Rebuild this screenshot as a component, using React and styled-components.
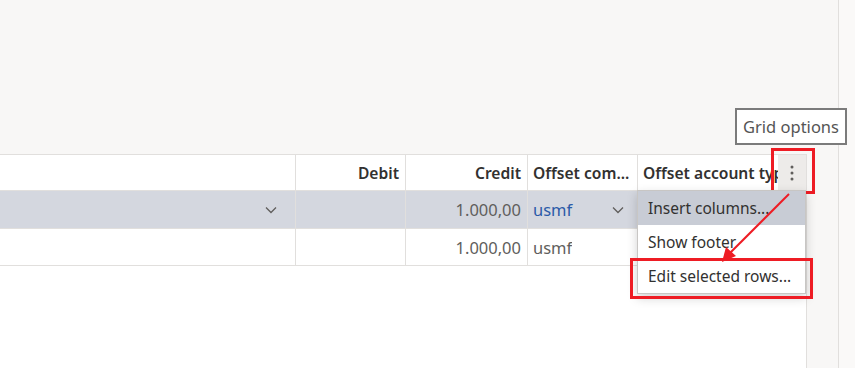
import styled, { createGlobalStyle } from 'styled-components';

const GlobalStyle = createGlobalStyle`
  * { box-sizing: border-box; }
  html, body { margin: 0; padding: 0; }
  body {
    font-family: "Segoe UI", "Noto Sans", sans-serif;
    background: #faf9f8;
  }
`;

const COLUMNS = '296px 110px 122px 110px 1fr';
const RED = '#ee1c24';

const Page = styled.div`
  position: relative;
  width: 855px;
  height: 368px;
  overflow: hidden;
  display: flex;
`;

const Workspace = styled.div`
  width: 839px;
  background: #f8f7f6;
  border-right: 1px solid #e1dfdd;
  padding-top: 154px;
  display: flex;
  flex-direction: column;
`;

const Sheet = styled.div`
  width: 807px;
  flex: 1;
  background: #ffffff;
  border-right: 1px solid #e1dfdd;
`;

const Row = styled.div`
  display: grid;
  grid-template-columns: ${COLUMNS};
  height: ${(p) => p.$height}px;
  background: ${(p) => (p.$selected ? '#d4d7df' : '#ffffff')};
  border-top: ${(p) => (p.$header ? '1px solid #e1dfdd' : 'none')};
  border-bottom: 1px solid #e1dfdd;
  font-size: ${(p) => (p.$header ? 15.6 : 16.5)}px;
  color: ${(p) => (p.$header ? '#323130' : '#605e5c')};
  font-weight: ${(p) => (p.$header ? 600 : 400)};
`;

const Cell = styled.div`
  position: relative;
  display: flex;
  align-items: center;
  justify-content: ${(p) => (p.$align === 'right' ? 'flex-end' : 'flex-start')};
  padding: 0 ${(p) => (p.$align === 'right' ? '6px' : '4px')} 0 5px;
  border-right: ${(p) => (p.$last ? 'none' : '1px solid #e1dfdd')};
  white-space: nowrap;
  min-width: 0;
`;

const Value = styled.span`
  color: ${(p) => (p.$link ? '#2b5aa8' : 'inherit')};
  flex: ${(p) => (p.$grow ? 1 : 'none')};
  overflow: hidden;
`;

const Clip = styled.span`
  flex: 1;
  overflow: hidden;
`;

const Chevron = styled.svg`
  width: 12px;
  height: 8px;
  margin-right: ${(p) => p.$gap || 12}px;
  flex: none;
`;

const OptionsButton = styled.div`
  position: relative;
  width: 28px;
  height: 100%;
  margin-right: -4px;
  background: #edebe9;
  display: flex;
  align-items: center;
  justify-content: center;
  flex: none;
`;

const Tooltip = styled.div`
  position: absolute;
  right: -41px;
  bottom: calc(100% + 10px);
  width: 112px;
  height: 37px;
  background: #ffffff;
  border: 2px solid #7b7b7b;
  color: #555555;
  font-weight: 400;
  font-size: 16.5px;
  display: flex;
  align-items: center;
  justify-content: center;
`;

const Highlight = styled.div`
  position: absolute;
  top: ${(p) => p.$t}px;
  right: ${(p) => p.$r}px;
  bottom: ${(p) => p.$b}px;
  left: ${(p) => p.$l}px;
  border: 3px solid ${RED};
  pointer-events: none;
`;

const Menu = styled.div`
  position: absolute;
  top: 100%;
  left: -1px;
  right: 0;
  background: #ffffff;
  border: 1px solid #c8c6c4;
  box-shadow: 0 4px 10px rgba(0, 0, 0, 0.18);
  font-size: 15.5px;
  font-weight: 400;
  color: #323130;
  z-index: 2;
`;

const MenuItem = styled.div`
  position: relative;
  height: 34px;
  padding-left: 10px;
  display: flex;
  align-items: center;
  background: ${(p) => (p.$active ? '#c8ccd5' : '#ffffff')};
`;

const Overlay = styled.svg`
  position: absolute;
  left: 0;
  top: 0;
  pointer-events: none;
  z-index: 3;
`;

const DownChevron = ({ gap }) => (
  <Chevron $gap={gap} viewBox="0 0 12 8">
    <path d="M1 1.5 L6 6.5 L11 1.5" fill="none" stroke="#605e5c" strokeWidth="1.3" />
  </Chevron>
);

const MoreIcon = () => (
  <svg width="4" height="16" viewBox="0 0 4 16">
    <circle cx="2" cy="2" r="1.5" fill="#605e5c" />
    <circle cx="2" cy="8" r="1.5" fill="#605e5c" />
    <circle cx="2" cy="14" r="1.5" fill="#605e5c" />
  </svg>
);

const App = () => (
  <>
    <GlobalStyle />
    <Page>
      <Workspace>
        <Sheet>
          <Row $header $height={37}>
            <Cell />
            <Cell $align="right">Debit</Cell>
            <Cell $align="right">Credit</Cell>
            <Cell>Offset com...</Cell>
            <Cell $last>
              <Clip>Offset account type</Clip>
              <OptionsButton>
                <MoreIcon />
                <Tooltip>Grid options</Tooltip>
                <Highlight $t={-7} $r={-9} $b={-4} $l={-7} />
              </OptionsButton>
              <Menu>
                <MenuItem $active>Insert columns...</MenuItem>
                <MenuItem>Show footer</MenuItem>
                <MenuItem>
                  Edit selected rows...
                  <Highlight $t={-1} $r={-8} $b={-6} $l={-8} />
                </MenuItem>
              </Menu>
            </Cell>
          </Row>
          <Row $selected $height={38}>
            <Cell $align="right">
              <DownChevron gap={12} />
            </Cell>
            <Cell />
            <Cell $align="right">1.000,00</Cell>
            <Cell>
              <Value $link $grow>usmf</Value>
              <DownChevron gap={9} />
            </Cell>
            <Cell $last />
          </Row>
          <Row $height={37}>
            <Cell />
            <Cell />
            <Cell $align="right">1.000,00</Cell>
            <Cell>
              <Value>usmf</Value>
            </Cell>
            <Cell $last />
          </Row>
        </Sheet>
      </Workspace>
      <Overlay width="855" height="368" viewBox="0 0 855 368">
        <line x1="789" y1="194" x2="729" y2="254" stroke={RED} strokeWidth="2" />
        <polygon points="722,262 726,247 736,256" fill={RED} />
      </Overlay>
    </Page>
  </>
);

export default App;
